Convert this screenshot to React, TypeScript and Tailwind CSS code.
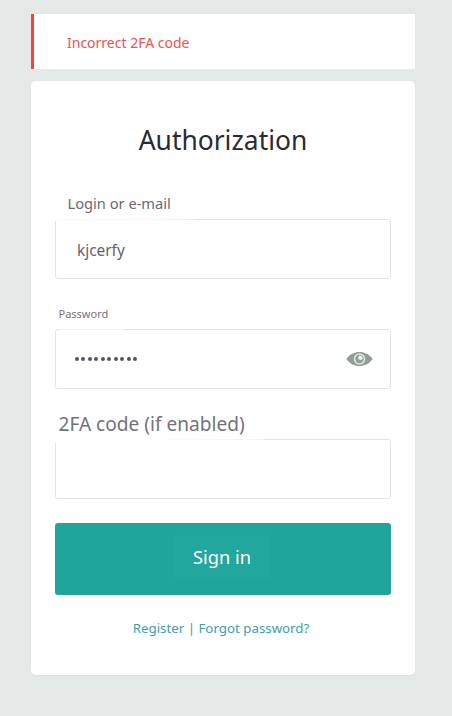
const fieldClass = "h-[60px] w-full rounded-[3px] border border-[#dfe6e3] bg-transparent outline-none";

function EyeIcon() {
  return (
    <svg width="27" height="16" viewBox="0 0 27 16" aria-label="Show password">
      <path d="M0.3 8C4 3 8.5 1 13.5 1S23 3 26.7 8C23 13 18.5 15 13.5 15S4 13 0.3 8Z" fill="#8f9e96" />
      <circle cx="13.5" cy="8" r="5" fill="#8f9e96" stroke="#dfe6e3" strokeWidth="1.6" />
      <path d="M13.5 4.5C11.7 5.5 11.7 8.2 13.5 8.8C15 9.3 16.4 8.5 16.8 7.5A3.5 3.5 0 0 0 13.5 4.5Z" fill="#edf1ef" />
    </svg>
  );
}

export default function App() {
  return (
    <main className="h-[716px] w-[452px] bg-[#e3e9e6] pl-[31px] pt-3.5 font-['Noto_Sans',sans-serif]">
      <div className="flex h-[55px] w-96 items-center border-l-3 border-[#f3433a] bg-white pl-[33px] pt-0.5 text-[14px] leading-5 text-[#f05250]">
        Incorrect 2FA code
      </div>
      <form
        className="mt-3 flex h-[594px] w-96 flex-col rounded-[5px] bg-white px-6 pt-[39px] shadow-[0_1px_2px_rgba(0,0,0,0.04)]"
        onSubmit={(e) => e.preventDefault()}
      >
        <h1 className="text-center text-[26.4px] leading-10 text-[#2b2a32]">Authorization</h1>
        <label className="mt-[30px] h-[29px] pl-[12.5px] text-[14.65px] leading-[26px] text-[#6b6877]">Login or e-mail</label>
        <div className="relative h-[60px]">
          <input className={`${fieldClass} pt-[3px] pl-[21px] text-[15.4px] text-[#625f72]`} defaultValue="kjcerfy" />
          <span className="absolute -top-px left-0 h-[3px] w-[139px] bg-linear-to-r from-white/80 from-50% to-white/40" />
        </div>
        <label className="mt-[23px] h-[27px] pl-[3.5px] text-[11px] leading-6 text-[#77727f]">Password</label>
        <div className="relative flex h-[60px] items-center justify-between rounded-[3px] border border-[#dfe6e3] pl-[18.5px] pr-[17px]">
          <span className="flex gap-[2.5px]">
            {Array.from({ length: 10 }, (_, i) => (
              <i key={i} className="size-1 rounded-full bg-linear-to-r from-[#3c6484] via-[#4e4e56] to-[#80604a]" />
            ))}
          </span>
          <EyeIcon />
          <span className="absolute -top-px left-1 h-px w-16 bg-white/60" />
        </div>
        <label className="mt-[19px] h-[31px] pl-[3.5px] text-[19.1px] leading-8 text-[#74717c]">2FA code (if enabled)</label>
        <div className="relative h-[60px]">
          <input className={`${fieldClass} pl-[21px] text-[15.4px] text-[#625f72]`} />
          <span className="absolute -top-px left-0 h-[5px] w-[208px] bg-linear-to-r from-white/90 from-50% to-white/50" />
        </div>
        <button className="mt-6 flex h-[72px] justify-center rounded-[3px] bg-[#1fa59a] pt-3 text-[18.3px] text-white">
          <span className="mr-0.5 flex h-[44px] w-24 items-center justify-center rounded bg-[#22a79c] pb-px">Sign in</span>
        </button>
        <div className="mt-[23px] pr-1 text-center text-[13.3px] leading-5 text-[#3da0b0]">Register | Forgot password?</div>
      </form>
    </main>
  );
}
